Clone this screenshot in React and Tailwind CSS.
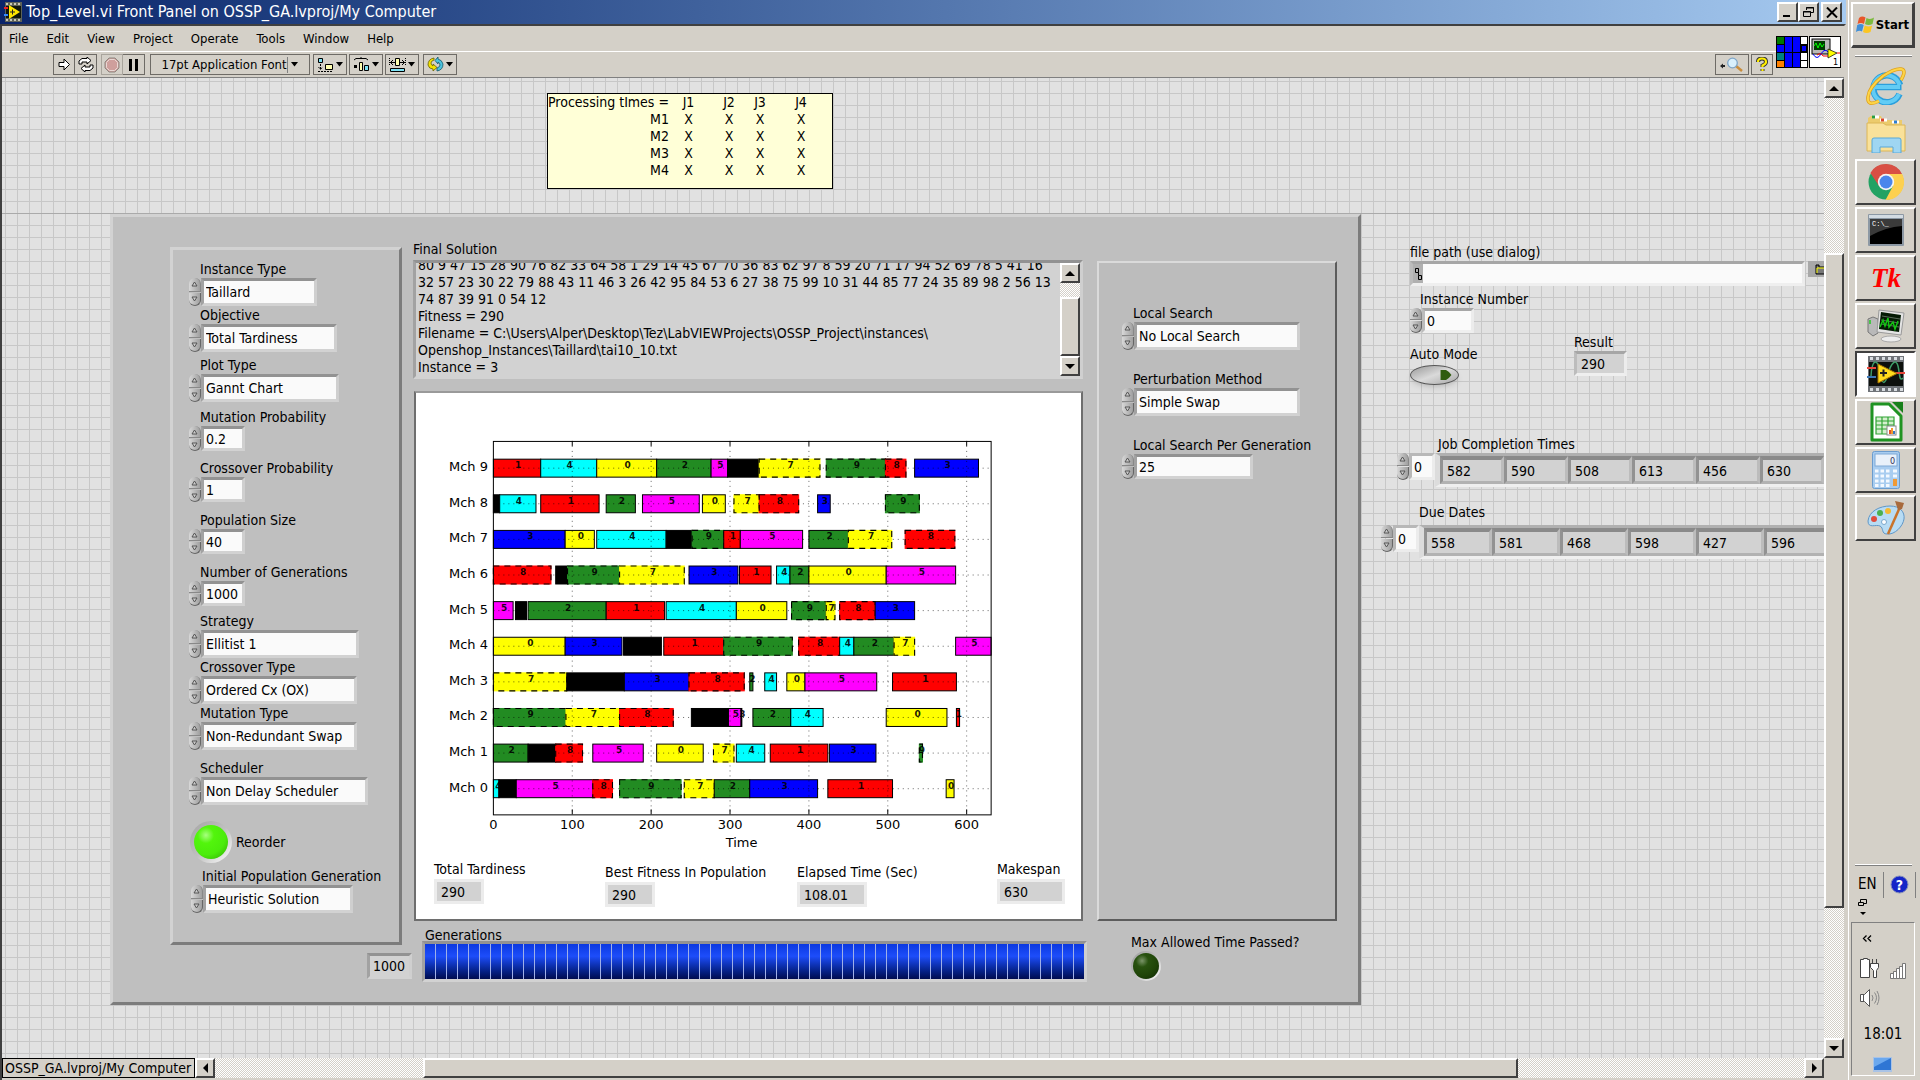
import React, { useEffect, useRef } from "react";

const COLORS = {
  0: "#ffff00",
  1: "#ff0000",
  2: "#228b22",
  3: "#0000ff",
  4: "#00ffff",
  5: "#ff00ff",
  6: "#000000",
  7: "#ffff00",
  8: "#ff0000",
  9: "#228b22",
};

// Each entry: [job, start, end]
const SCHEDULE = [
  [9, [[1, 0, 60], [4, 60, 131], [0, 131, 207], [2, 207, 276], [5, 276, 297], [6, 297, 337], [7, 337, 414], [9, 422, 497], [8, 497, 523], [3, 534, 615]]],
  [8, [[6, 0, 8], [4, 8, 54], [1, 60, 134], [2, 143, 180], [5, 189, 261], [0, 265, 294], [7, 305, 337], [8, 337, 387], [3, 411, 427], [9, 497, 540]]],
  [7, [[3, 0, 91], [0, 91, 128], [4, 131, 219], [6, 219, 252], [9, 252, 292], [1, 292, 313], [5, 313, 392], [2, 400, 450], [7, 450, 505], [8, 522, 585]]],
  [6, [[8, 0, 73], [6, 79, 94], [9, 94, 160], [7, 160, 242], [3, 248, 310], [1, 312, 352], [4, 359, 376], [2, 376, 400], [0, 400, 498], [5, 498, 586]]],
  [5, [[5, 0, 25], [6, 28, 42], [2, 44, 143], [1, 143, 217], [4, 219, 308], [0, 308, 372], [9, 378, 422], [7, 422, 433], [8, 439, 484], [3, 484, 534]]],
  [4, [[0, 0, 91], [3, 91, 163], [6, 165, 213], [1, 216, 292], [9, 292, 379], [8, 387, 439], [4, 439, 457], [2, 457, 508], [7, 508, 534], [5, 586, 631]]],
  [3, [[7, 0, 93], [6, 93, 166], [3, 166, 248], [8, 248, 318], [2, 325, 329], [4, 344, 359], [0, 372, 395], [5, 395, 486], [1, 506, 587]]],
  [2, [[9, 0, 92], [7, 92, 160], [8, 160, 228], [6, 251, 298], [5, 298, 314], [3, 314, 315], [2, 329, 377], [4, 377, 418], [0, 498, 575], [1, 587, 591]]],
  [1, [[2, 0, 44], [6, 44, 79], [8, 79, 113], [5, 126, 190], [0, 207, 266], [7, 279, 305], [4, 308, 344], [1, 351, 424], [3, 426, 485], [9, 540, 544]]],
  [0, [[4, 0, 7], [6, 7, 29], [5, 29, 126], [8, 126, 151], [9, 160, 238], [7, 242, 280], [2, 280, 325], [3, 325, 411], [1, 424, 506], [0, 574, 584]]],
];

const X0 = 77.5;
const SCALE = 0.79;

function GanttChart() {
  const ticks = [0, 100, 200, 300, 400, 500, 600];
  const rowY = (m) => 396.3 - m * 35.67;
  return (
    <svg viewBox="0 0 666 468" className="block w-full font-['DejaVu_Sans',sans-serif]" role="img" aria-label="Gantt chart">
      {SCHEDULE.map(([m, bars]) => (
        <g key={m}>
          {bars.map(([job, s, e], i) => {
            const x = X0 + s * SCALE;
            const w = Math.min((e - s) * SCALE, 576 - x);
            return (
              <g key={i}>
                <rect x={x} y={rowY(m) - 9} width={w} height="18" fill={COLORS[job]} stroke={job > 6 ? COLORS[job] : "#000"} strokeWidth="1" />
                {job > 6 && <rect x={x} y={rowY(m) - 9} width={w} height="18" fill="none" stroke="#000" strokeWidth="1.1" strokeDasharray="6 5" />}
              </g>
            );
          })}
        </g>
      ))}
      <g stroke="#000" strokeOpacity="0.6" strokeWidth="1" strokeDasharray="1 4">
        {SCHEDULE.map(([m]) => (
          <line key={m} x1={X0} x2="576" y1={rowY(m)} y2={rowY(m)} />
        ))}
        {ticks.slice(1).map((t) => (
          <line key={t} x1={X0 + t * SCALE} x2={X0 + t * SCALE} y1="48" y2="422" />
        ))}
      </g>
      <g stroke="#000" strokeWidth="1">
        {ticks.slice(1).map((t) => (
          <path key={t} d={`M${X0 + t * SCALE} 48v5M${X0 + t * SCALE} 422v-5`} fill="none" />
        ))}
        <rect x={X0} y="48.5" width="498.5" height="374" fill="none" />
      </g>
      <g fontSize="9" fontWeight="bold" textAnchor="middle" fill="#000" fillOpacity="0.9">
        {SCHEDULE.map(([m, bars]) =>
          bars
            .filter(([job]) => job !== 6)
            .map(([job, s, e], i) => (
              <text key={m + "-" + i} x={X0 + Math.max(((s + e) / 2) * SCALE + 1, 5)} y={rowY(m)}>
                {job}
              </text>
            ))
        )}
      </g>
      <g fontSize="13" fill="#000">
        {SCHEDULE.map(([m]) => (
          <text key={m} x="72" y={rowY(m) + 3} textAnchor="end">
            Mch {m}
          </text>
        ))}
        {ticks.map((t) => (
          <text key={t} x={X0 + t * SCALE} y="437" textAnchor="middle">
            {t}
          </text>
        ))}
        <text x="326" y="455" textAnchor="middle">
          Time
        </text>
      </g>
    </svg>
  );
}

const RAISED = "border-2 border-t-white border-l-white border-r-[#404040] border-b-[#404040] bg-[#d4d0c8]";
const SUNK = "border-[3px] border-t-[#929292] border-l-[#a2a2a2] border-r-[#cfcfcf] border-b-[#d2d2d2]";
const SUNK_LIGHT = "border-[3px] border-t-[#a6a6a6] border-l-[#bcbcbc] border-r-[#ececec] border-b-[#efefef]";

function Triangle({ dir, size = 10 }) {
  const d = {
    up: "M0 8L5 3L10 8Z",
    down: "M0 3L5 8L10 3Z",
    left: "M8 0L3 5L8 10Z",
    right: "M3 0L8 5L3 10Z",
  }[dir];
  return (
    <svg width={size} height={size} viewBox="0 0 10 10" aria-hidden="true">
      <path d={d} fill="#000" />
    </svg>
  );
}

function Spinner({ name }) {
  return (
    <span className="flex w-3 shrink-0 flex-col gap-px self-stretch">
      <button aria-label={"Increase " + name} className="flex flex-1 items-center justify-center rounded-t-full border-r border-b border-[#888] bg-linear-to-r from-[#d8d8d8] to-[#a0a0a0]">
        <svg width="7" height="6" viewBox="0 0 7 6"><path d="M1 5L3.500 1L6 5Z" fill="#ccc" stroke="#555" /></svg>
      </button>
      <button aria-label={"Decrease " + name} className="flex flex-1 items-center justify-center rounded-b-full border-r border-b border-[#666] bg-linear-to-r from-[#d8d8d8] to-[#a0a0a0]">
        <svg width="7" height="6" viewBox="0 0 7 6"><path d="M1 1L3.500 5L6 1Z" fill="#ccc" stroke="#555" /></svg>
      </button>
    </span>
  );
}

function Control({ id, label, value, numeric, width, gap = "", light, indent = "pl-[11px]" }) {
  const box = (light ? SUNK_LIGHT : SUNK) + " " + width + " appearance-none bg-[#fafafa] px-0.5 text-sm leading-4 rounded-none text-black outline-none " + (numeric ? "h-[25px]" : "h-7");
  return (
    <div className={gap}>
      <label htmlFor={id} className={"block text-sm leading-[18px] whitespace-nowrap " + indent}>{label}</label>
      <div className="flex">
        <Spinner name={label} />
        {numeric ? (
          <input id={id} defaultValue={value} className={box} />
        ) : (
          <select id={id} defaultValue={value} className={box}>
            <option>{value}</option>
          </select>
        )}
      </div>
    </div>
  );
}

function Indicator({ label, value, width, gap = "", tone = "panel" }) {
  const edge = tone === "white" ? "mt-px border-[3px] border-[#ececec]" : SUNK_LIGHT;
  return (
    <div className={gap}>
      <div className="text-sm leading-[18px] whitespace-nowrap">{label}</div>
      <output aria-label={label} className={edge + " " + width + " flex h-[25px] items-center bg-[#d2d2d2] pl-1 text-sm leading-4"}>{value}</output>
    </div>
  );
}

const LEFT_CONTROLS = [
  ["instance-type", "Instance Type", "Taillard", false, "w-[116px]", ""],
  ["objective", "Objective", "Total Tardiness", false, "w-[136px]", ""],
  ["plot-type", "Plot Type", "Gannt Chart", false, "w-[138px]", "mt-1"],
  ["mutation-probability", "Mutation Probability", "0.2", true, "w-[44px]", "mt-1.5"],
  ["crossover-probability", "Crossover Probability", "1", true, "w-[44px]", "mt-2"],
  ["population-size", "Population Size", "40", true, "w-[44px]", "mt-[9px]"],
  ["generations", "Number of Generations", "1000", true, "w-[44px]", "mt-[9px]"],
  ["strategy", "Strategy", "Ellitist 1", false, "w-[158px]", "mt-1.5"],
  ["crossover-type", "Crossover Type", "Ordered Cx (OX)", false, "w-[156px]", ""],
  ["mutation-type", "Mutation Type", "Non-Redundant Swap", false, "w-[156px]", ""],
  ["scheduler", "Scheduler", "Non Delay Scheduler", false, "w-[167px]", "mt-[9px]"],
];

const PANEL = "border-[3px] border-t-[#d2d2d2] border-l-[#d2d2d2] border-r-[#7c7c7c] border-b-[#7c7c7c] bg-[#bfbfbf]";

function SettingsPanel() {
  return (
    <section className={PANEL + " w-[232px] pt-[10px] pb-[29px] pl-4"}>
      {LEFT_CONTROLS.map(([id, label, value, numeric, width, gap]) => (
        <Control key={id} id={id} label={label} value={value} numeric={numeric} width={width} gap={gap} />
      ))}
      <label className="mt-4 flex items-center gap-1 pl-px text-sm">
        <input type="checkbox" defaultChecked className="sr-only" />
        <span className="flex size-[42px] items-center justify-center rounded-full bg-linear-135 from-[#a4a4a4] via-[#bfbfbf] to-white">
          <span className="size-[34px] rounded-full bg-[radial-gradient(circle_at_35%_30%,#a8ff80_0%,#52f50c_25%,#4bec0b_60%,#2fa603_100%)]" />
        </span>
        Reorder
      </label>
      <Control id="initial-population" label="Initial Population Generation" value="Heuristic Solution" numeric={false} width="w-[150px]" gap="mt-1 ml-0.5" />
    </section>
  );
}

const SOLUTION = `80 9 47 15 28 90 76 82 33 64 58 1 29 14 45 67 70 36 83 62 97 8 59 20 71 17 94 52 69 78 5 41 16
32 57 23 30 22 79 88 43 11 46 3 26 42 95 84 53 6 27 38 75 99 10 31 44 85 77 24 35 89 98 2 56 13
74 87 39 91 0 54 12
Fitness = 290
Filename = C:\\Users\\Alper\\Desktop\\Tez\\LabVIEWProjects\\OSSP_Project\\instances\\
Openshop_Instances\\Taillard\\tai10_10.txt
Instance = 3`;

const DITHER = "bg-[repeating-conic-gradient(#ffffff_0_25%,#d4d0c8_0_50%)] bg-[length:2px_2px]";

function FinalSolution() {
  const ref = useRef(null);
  useEffect(() => {
    ref.current.scrollTop = ref.current.scrollHeight;
  }, []);
  return (
    <div className="pr-[14px]">
      <label htmlFor="final-solution" className="block text-sm leading-[18px]">Final Solution</label>
      <div className={SUNK + " mt-0.5 flex h-[119px] bg-[#d2d2d2]"}>
        <textarea id="final-solution" ref={ref} readOnly wrap="off" defaultValue={SOLUTION} className="min-w-0 flex-1 resize-none overflow-hidden pl-0.5 text-sm leading-[17px] outline-none" />
        <div className={"flex w-5 flex-col " + DITHER}>
          <button aria-label="Scroll up" className={RAISED + " flex h-5 items-center justify-center"}><Triangle dir="up" /></button>
          <div className="h-[14px]" />
          <div className={RAISED + " flex-1"} />
          <button aria-label="Scroll down" className={RAISED + " flex h-5 items-center justify-center"}><Triangle dir="down" /></button>
        </div>
      </div>
    </div>
  );
}

function Results() {
  return (
    <div className="flex min-w-0 flex-1 flex-col">
      <FinalSolution />
      <div className="mt-3 mr-[14px] ml-px border-2 border-t-[#9a9a9a] border-l-[#6e6e6e] border-r-[#6e6e6e] border-b-[#6e6e6e] bg-white pb-3">
        <GanttChart />
        <div className="grid grid-cols-[171px_192px_200px_1fr] pl-[18px]">
          <Indicator tone="white" label="Total Tardiness" value="290" width="w-[50px]" />
          <Indicator tone="white" label="Best Fitness In Population" value="290" width="w-[50px]" gap="pt-[3px]" />
          <Indicator tone="white" label="Elapsed Time (Sec)" value="108.01" width="w-[70px]" gap="pt-[3px]" />
          <Indicator tone="white" label="Makespan" value="630" width="w-[68px]" />
        </div>
      </div>
      <div className="mt-2 pr-[10px] pl-[9px]">
        <div className="pl-[3px] text-sm leading-3">Generations</div>
        <div className={SUNK + " h-[41px]"} role="progressbar" aria-label="Generations" aria-valuenow={1000} aria-valuemax={1000}>
          <div className="flex h-full gap-px bg-[#9fb0e8]">
            {Array.from({ length: 60 }, (_, i) => (
              <span key={i} className="flex-1 bg-linear-to-b from-[#0a38e0] via-[#1d4dfa] via-35% to-[#000c50]" />
            ))}
          </div>
        </div>
      </div>
    </div>
  );
}

function SearchColumn() {
  return (
    <div className="w-[240px] shrink-0">
      <section className="mt-[21px] h-[660px] border-2 border-t-[#dadada] border-l-[#dadada] border-r-[#5c5c5c] border-b-[#5c5c5c] bg-[#bcbcbc] pt-[41px] pl-[23px]">
        <Control id="local-search" label="Local Search" value="No Local Search" width="w-[166px]" />
        <Control id="perturbation" label="Perturbation Method" value="Simple Swap" width="w-[166px]" gap="mt-5" />
        <Control id="per-generation" label="Local Search Per Generation" value="25" numeric width="w-[119px]" gap="mt-5" />
      </section>
      <div className="mt-3 pl-[34px]">
        <div className="text-sm leading-[18px]">Max Allowed Time Passed?</div>
        <span role="img" aria-label="Off" className="flex size-[30px] items-center justify-center rounded-full bg-linear-135 from-[#9c9c9c] via-[#bfbfbf] to-white">
          <span className="size-[26px] rounded-full bg-[radial-gradient(circle_at_35%_30%,#7a9468_0%,#28520f_25%,#1f4408_60%,#0d2402_100%)]" />
        </span>
      </div>
    </div>
  );
}

function ArrayField({ id, label, index, values, cell, labelPad, rowPad }) {
  return (
    <div>
      <label htmlFor={id} className={"block text-sm leading-[18px] " + labelPad}>{label}</label>
      <div className={"flex items-start " + rowPad}>
        <div className="flex h-[27px]">
          <Spinner name={label} />
          <input id={id} defaultValue={index} className="h-[27px] w-[26px] border-[3px] border-[#ececec] border-t-[#b8b8b8] border-l-[#b8b8b8] bg-[#fafafa] pl-0.5 text-sm outline-none" />
        </div>
        <div className="min-w-0 flex-1 overflow-hidden border-t-[3px] border-b-[3px] border-l-[5px] border-[#b0b0b0] border-b-[#efefef] border-l-[#dcdcdc]">
          <ul className="flex w-max">
            {values.map((v, i) => (
              <li key={i} className={cell + " flex h-7 items-center border-[3px] border-t-4 border-t-[#8a8a8a] border-r-[#bcbcbc] border-b-[#b2b2b2] border-l-[#929292] bg-[#d2d2d2] pl-1 text-sm"}>{v}</li>
            ))}
          </ul>
        </div>
      </div>
    </div>
  );
}

function SideControls() {
  return (
    <div className="w-[463px] shrink-0 pt-[29px]">
      <div className="pl-[49px]">
        <label htmlFor="file-path" className="block text-sm leading-[18px]">file path (use dialog)</label>
        <div className="flex items-start">
          <div className={SUNK_LIGHT + " flex h-[25px] w-[395px] bg-[#b0b0b0]"}>
            <svg width="10" height="19" viewBox="0 0 10 19" aria-hidden="true"><path d="M2.500 4.500h3v4h-3zM5.500 8.500v3M5.500 11.500h3v4h-3z" fill="none" stroke="#000" /></svg>
            <input id="file-path" defaultValue="" className="min-w-0 flex-1 bg-[#fafafa] text-sm outline-none" />
          </div>
          <button aria-label="Browse" className="ml-[3px] flex h-4 flex-1 items-center justify-end bg-[#a8a8a8]">
            <svg width="9" height="12" viewBox="0 0 9 12"><path d="M1 11V2h3v2h6v7z" fill="#777" stroke="#000" /><path d="M2 5h7M2 5v5" stroke="#ff0" /></svg>
          </button>
        </div>
      </div>
      <div className="mt-1 pl-[49px]">
        <Control id="instance-number" label="Instance Number" value="0" numeric light width="w-[52px]" indent="pl-2.5" />
      </div>
      <div className="flex pl-[49px]">
        <div className="w-[164px] pt-3">
          <label htmlFor="auto-mode" className="block text-sm leading-[18px]">Auto Mode</label>
          <button id="auto-mode" role="switch" aria-checked="false" className="mt-0.5 flex h-5 w-[49px] items-center justify-end rounded-[50%] border border-[#555] bg-linear-to-br from-[#989898] via-[#dadada] to-[#a8a8a8] pr-1.5 shadow-md">
            <svg width="12" height="10" viewBox="0 0 12 11"><path d="M0 0h6q4 2 6 5.500q-2 3-6 5.500h-6z" fill="#2f5c10" /></svg>
          </button>
        </div>
        <Indicator label="Result" value="290" width="w-[53px]" />
      </div>
      <div className="mt-[50px]">
        <ArrayField id="job-index" label="Job Completion Times" index="0" values={[582, 590, 508, 613, 456, 630]} cell="w-[64px]" labelPad="pl-[77px]" rowPad="pl-9" />
      </div>
      <div className="mt-4">
        <ArrayField id="due-index" label="Due Dates" index="0" values={[558, 581, 468, 598, 427, 596]} cell="w-[68px]" labelPad="pl-[58px]" rowPad="pt-1 pl-5" />
      </div>
    </div>
  );
}

function NoteBox() {
  return (
    <div className="mt-[15px] mb-6 ml-[545px] h-24 w-[286px] border border-black bg-[#ffffd7]">
      <table className="text-sm leading-[17px]">
        <thead>
          <tr>
            <th className="w-[116px] text-left font-normal whitespace-nowrap">Processing tImes =</th>
            <th className="w-[39px] font-normal">J1</th>
            <th className="w-[42px] font-normal">J2</th>
            <th className="w-5 font-normal">J3</th>
            <th className="w-[62px] font-normal">J4</th>
          </tr>
        </thead>
        <tbody>
          {["M1", "M2", "M3", "M4"].map((m) => (
            <tr key={m} className="text-center">
              <td className="text-right">{m}</td>
              <td>X</td>
              <td>X</td>
              <td>X</td>
              <td>X</td>
            </tr>
          ))}
        </tbody>
      </table>
    </div>
  );
}

function Canvas() {
  return (
    <main className="min-w-0 flex-1 overflow-hidden bg-[#e1e1e1] bg-[linear-gradient(to_right,#c7c7c7_1px,transparent_1px),linear-gradient(to_bottom,#c7c7c7_1px,transparent_1px)] bg-[length:12px_12px] bg-[position:3px_3px]">
      <NoteBox />
      <div className="flex items-start border-t border-[#aaa] pl-[108px]">
        <div className={PANEL + " flex min-w-0 flex-1 items-start pt-[23px] pr-[21px] pb-[20px] pl-[57px]"}>
          <div className="flex w-[243px] shrink-0 flex-col pt-[7px]">
            <SettingsPanel />
            <output aria-label="Generation count" className={SUNK + " mt-2 mr-px flex h-[26px] w-[45px] items-center self-end bg-[#d2d2d2] pl-[3px] text-sm"}>1000</output>
          </div>
          <Results />
          <SearchColumn />
        </div>
        <SideControls />
      </div>
    </main>
  );
}

const TOOL = "flex h-[21px] shrink-0 items-center justify-center border border-[#6e6b66] bg-[#d4d0c8]";

function Caret() {
  return <svg width="7" height="5" viewBox="0 0 7 5" aria-hidden="true"><path d="M0 0h7L3.500 4.500z" fill="#000" /></svg>;
}

function Toolbar() {
  return (
    <div className="flex h-[27px] items-center border-t border-b border-t-white border-b-[#808080] pl-[51px]">
      <button aria-label="Run" className={TOOL + " w-[22px]"}>
        <svg width="13" height="13" viewBox="0 0 13 13"><path d="M1 4.500h5V1l5.500 5.500L6 12V8.500H1z" fill="#fff" stroke="#000" /></svg>
      </button>
      <button aria-label="Run continuously" className={TOOL + " w-[22px] border-l-0"}>
        <svg width="16" height="15" viewBox="0 0 16 15" fill="#fff" stroke="#000"><path d="M1 7V4l3-2.500h5V0l4 3.500L9 7V5H4v2z" /><path d="M15 8v3l-3 2.500H7V15l-4-3.500L7 8v2h5V8z" /></svg>
      </button>
      <button aria-label="Abort" className={TOOL + " ml-1 w-[22px] border-[#a8a49c]"}>
        <svg width="16" height="16" viewBox="0 0 16 16"><path d="M5 1h6l4 4v6l-4 4H5l-4-4V5z" fill="#cf9f9c" stroke="#8d8780" /><path d="M5.500 2.500h5l3 3v5l-3 3h-5l-3-3v-5z" fill="none" stroke="#e8d8d4" /></svg>
      </button>
      <button aria-label="Pause" className={TOOL + " w-[22px] border-l-0"}>
        <svg width="11" height="12" viewBox="0 0 11 12"><path d="M1 0h3v12H1zM7 0h3v12H7z" fill="#000" /></svg>
      </button>
      <button className={TOOL + " ml-[5px] w-40 justify-between pr-[7px] pl-1.5 text-[13px] whitespace-nowrap"}>
        <span>17pt Application Font</span>
        <span className="flex h-4 items-center border-l border-[#808080] pl-[3px]"><Caret /></span>
      </button>
      <button aria-label="Align objects" className={TOOL + " ml-[3px] w-[34px] gap-0.5"}>
        <svg width="17" height="15" viewBox="0 0 17 15"><path d="M1.500 1.500h4v4h-4z" fill="#7fe3f5" stroke="#000" /><path d="M3.500 7v5M1.500 10l2 2.500 2-2.500M1 14.500h15" fill="none" stroke="#000" strokeDasharray="2 1" /><path d="M8.500 7.500h7v5h-7z" fill="#ffffb0" stroke="#000" /></svg>
        <Caret />
      </button>
      <button aria-label="Distribute objects" className={TOOL + " ml-0.5 w-[34px] gap-0.5"}>
        <svg width="17" height="15" viewBox="0 0 17 15"><path d="M1 3l2-1.500h10l2 1.500M8 1.500V0" fill="none" stroke="#000" /><path d="M1 8h3v3H1z" fill="#000" /><path d="M6.500 5.500h3v8h-3z" fill="#ffffb0" stroke="#000" /><path d="M11.500 8.500h4v5h-4z" fill="#7fe3f5" stroke="#000" /></svg>
        <Caret />
      </button>
      <button aria-label="Resize objects" className={TOOL + " ml-0.5 w-[34px] gap-0.5"}>
        <svg width="17" height="16" viewBox="0 0 17 16"><path d="M.5 1v8M16.500 1v8" stroke="#000" strokeDasharray="1 1" /><path d="M1 5.500h15M4 3L1.500 5.500L4 8M13 3l2.500 2.500L13 8" fill="none" stroke="#000" /><path d="M6.500 1.500h4v7h-4z" fill="#ffffb0" stroke="#000" /><path d="M1.500 11.500h14v3h-14z" fill="#7fe3f5" stroke="#000" /></svg>
        <Caret />
      </button>
      <button aria-label="Reorder" className={TOOL + " ml-1 w-[34px] gap-0.5"}>
        <svg width="17" height="15" viewBox="0 0 17 15" strokeWidth=".8"><path d="M7 1Q1 2 1 8q1 4 5 4v2l4-3.500L6 7v2Q4 8 4 6q0-2 3-3z" fill="#f3e200" stroke="#665f00" /><path d="M10 14q6-1 6-7q-1-4-5-5V0L8 3.500L11 7V5q2 1 2 3t-3 3z" fill="#4cc3de" stroke="#125567" /></svg>
        <Caret />
      </button>
      <div className="flex-1" />
      <button aria-label="Search" className={TOOL + " w-[34px]"}>
        <svg width="24" height="16" viewBox="0 0 24 16"><path d="M0 9l3-2.500v1.500h2v2H3v1.500z" fill="#222" /><path d="M16 9l6 5" stroke="#c98d3c" strokeWidth="2.500" /><circle cx="12.500" cy="6" r="4.800" fill="#d9f0fc" stroke="#7fa6c8" strokeWidth="1.300" /></svg>
      </button>
      <button aria-label="Context help" className={TOOL + " mr-[3px] ml-0.5 w-[22px]"}>
        <svg width="12" height="15" viewBox="0 0 12 15"><path d="M2 5q0-3.500 4-3.500T10 5q0 2-3.500 3.500V10M6.500 12v2" fill="none" stroke="#333" strokeWidth="4" /><path d="M2 5q0-3.500 4-3.500T10 5q0 2-3.500 3.500V10M6.500 12v2" fill="none" stroke="#ffee00" strokeWidth="2.200" /></svg>
      </button>
    </div>
  );
}

function MenuRow() {
  return (
    <div className="flex bg-[#d4d0c8]">
      <div className="min-w-0 flex-1">
        <nav className="flex h-[25px] items-center gap-[18px] pl-[7px] text-[13px]">
          {["File", "Edit", "View", "Project", "Operate", "Tools", "Window", "Help"].map((m) => (
            <button key={m}>{m}</button>
          ))}
        </nav>
        <Toolbar />
      </div>
      <div className="flex items-center gap-px border-b border-[#808080] pr-[3px]">
        <svg width="32" height="32" viewBox="0 0 32 32" role="img" aria-label="Connector pane">
          <rect width="32" height="32" fill="#000" />
          <path d="M1 1h7v7H1z" fill="#007a00" /><path d="M1 9h7v7H1z" fill="#0000ff" /><path d="M1 17h7v7H1z" fill="#008080" /><path d="M1 25h7v6H1z" fill="#ff8000" />
          <path d="M9 1h7v15H9zM17 1h7v15h-7zM9 17h7v14H9zM17 17h7v14h-7z" fill="#0000ff" />
          <path d="M25 1h6v7h-6zM25 17h6v7h-6zM25 25h6v6h-6z" fill="#fff" /><path d="M26 10h4v5h-4z" fill="#0000ff" />
        </svg>
        <svg width="32" height="32" viewBox="0 0 32 32" role="img" aria-label="VI icon">
          <rect x=".5" y=".5" width="31" height="31" fill="#fff" stroke="#000" />
          <rect x="3" y="3" width="18" height="15" fill="#b8b8b8" stroke="#000" />
          <rect x="5" y="5" width="11" height="9" fill="#003b00" /><path d="M5 10l2-3 2 5 2-5 2 4 2-3" fill="none" stroke="#0f0" />
          <path d="M4 18q4 7 8 0t8-1" fill="none" stroke="#00f" /><path d="M8 19q4-3 6 1h5" fill="none" stroke="#f00" />
          <path d="M19 13l9 4-9 5z" fill="#ffff00" stroke="#000" strokeWidth=".7" /><path d="M28 17h3" stroke="#f00" />
          <text x="24" y="29" fontSize="9">1</text>
        </svg>
      </div>
    </div>
  );
}

function TitleBar() {
  const btn = RAISED + " flex h-5 w-[21px] items-center justify-center";
  return (
    <header className="flex h-6 items-center bg-linear-to-r from-[#0a246a] to-[#a6caf0] pr-1 pl-1">
      <svg width="19" height="20" viewBox="0 0 19 20" aria-hidden="true">
        <rect x="1" width="17" height="20" fill="#5e6258" /><rect x="2" y="4" width="15" height="12" fill="#10160c" />
        <path d="M2 2h15M2 18h15" stroke="#c8c8b8" strokeWidth="2" strokeDasharray="2 2" />
        <path d="M0 6h4" stroke="#e22" strokeWidth="2" /><path d="M0 13h4" stroke="#38f" strokeWidth="2" />
        <path d="M5 3l11 7-11 7z" fill="#ffe600" /><path d="M6 10h5M8.500 7.500v5" stroke="#222" />
      </svg>
      <h1 className="flex-1 pl-[3px] text-base leading-5 text-white">Top_Level.vi Front Panel on OSSP_GA.lvproj/My Computer</h1>
      <button aria-label="Minimize" className={btn}><svg width="12" height="12" viewBox="0 0 12 12"><path d="M1 9h7v2H1z" /></svg></button>
      <button aria-label="Restore" className={btn}><svg width="13" height="12" viewBox="0 0 13 12" fill="none" stroke="#000"><path d="M4.500 4V1.500h7v5h-3M4 2h8M1.500 5.500h7v5h-7zM1 6h8" /></svg></button>
      <button aria-label="Close" className={btn + " ml-0.5"}><svg width="12" height="11" viewBox="0 0 12 11"><path d="M1 .5l10 10M11 .5l-10 10" stroke="#000" strokeWidth="2" /></svg></button>
    </header>
  );
}

function VerticalScroll() {
  return (
    <div className={"flex w-5 shrink-0 flex-col " + DITHER}>
      <button aria-label="Scroll canvas up" className={RAISED + " flex h-5 items-center justify-center"}><Triangle dir="up" /></button>
      <div className="h-[155px]" />
      <div className={RAISED + " flex-1"} />
      <div className="h-[130px]" />
      <button aria-label="Scroll canvas down" className={RAISED + " flex h-5 items-center justify-center"}><Triangle dir="down" /></button>
    </div>
  );
}

function BottomBar() {
  return (
    <footer className="flex h-[22px] bg-[#d4d0c8] pb-0.5">
      <div className="flex w-[193px] items-center border border-black pl-0.5 text-sm leading-4 whitespace-nowrap">OSSP_GA.lvproj/My Computer</div>
      <div className={"flex flex-1 " + DITHER}>
        <button aria-label="Scroll left" className={RAISED + " flex w-5 items-center justify-center"}><Triangle dir="left" /></button>
        <div className="w-[208px]" />
        <div className={RAISED + " flex-1"} />
        <div className="w-[286px]" />
        <button aria-label="Scroll right" className={RAISED + " flex w-5 items-center justify-center"}><Triangle dir="right" /></button>
      </div>
      <div className="w-5" />
    </footer>
  );
}

const WindowsFlag = () => (
  <svg width="19" height="19" viewBox="0 0 19 19" aria-hidden="true">
    <path d="M3 3q3-2.500 6.500-.5L8 9Q5 7 1.500 9z" fill="#e8562a" /><path d="M10.500 3q4 2 7.500-.5L16.500 9q-4 2-7.500 0z" fill="#7cba3d" />
    <path d="M1.200 10Q5 8 7.700 10L6 16.500Q3.500 15 0 17z" fill="#3f8fd8" /><path d="M8.700 10.500q4 2 7.500 0L14.500 17q-4 2-7.500 0z" fill="#fbc623" />
  </svg>
);

const APPS = [
  ["Google Chrome",
    <svg viewBox="0 0 36 36" className="size-9"><circle cx="18" cy="18" r="17.500" fill="#22a263" /><path d="M18 10h16A18 18 0 0 0 2.400 9L11 22z" fill="#d94f44" /><path d="M25 22l-7.500 14A18 18 0 0 0 34.200 10H18z" fill="#fdd04f" /><circle cx="18" cy="18" r="8.200" fill="#f4f4f4" /><circle cx="18" cy="18" r="6.500" fill="#4a86ec" /></svg>],
  ["Command Prompt",
    <svg viewBox="0 0 36 32" className="h-8 w-9"><rect width="36" height="32" rx="1" fill="#8c98a4" /><rect x="1" y="1" width="34" height="3" fill="#d3dbe2" /><rect x="2" y="5" width="32" height="25" fill="#000" /><path d="M2 5h32v7Q18 13 2 22z" fill="#3a3a3a" /><text x="4" y="12" fontSize="7" fill="#fff" fontFamily="Liberation Mono, monospace">C:\_</text></svg>],
  ["Tk",
    <svg viewBox="0 0 36 30" className="h-[30px] w-9"><text x="18" y="24" fontSize="27" fontStyle="italic" fontWeight="bold" fill="#f00" textAnchor="middle" fontFamily="Liberation Serif, serif">Tk</text></svg>],
  ["System monitor",
    <svg viewBox="0 0 38 34" className="h-[34px] w-[38px]"><path d="M1 10l5-2 5 2v14l-5 3-5-4z" fill="#b9b9b9" stroke="#777" /><path d="M3 11v4" stroke="#2c2" strokeWidth="1.500" /><path d="M12 1l25 3-3 22-24-3z" fill="#e4e4e4" stroke="#999" /><path d="M14 3l20 3-2 17-20-3z" fill="#041a04" /><path d="M15 7l18 3M14 11l18 3M14 15l18 3" stroke="#5a6a5a" /><path d="M13 18l3-7 2 6 3-8 1 9 4-5 2 7 3-8" fill="none" stroke="#14c414" strokeWidth="1.500" /><ellipse cx="24" cy="30" rx="10" ry="3" fill="#ececec" stroke="#aaa" /></svg>],
  ["LabVIEW",
    <svg viewBox="0 0 38 36" className="h-9 w-[38px]"><rect x="1" width="36" height="36" fill="#6f7378" /><path d="M3 2.500h34M3 33.500h34" stroke="#d8dce0" strokeWidth="3" strokeDasharray="3 3" /><rect x="2" y="6" width="34" height="24" fill="#0d100d" /><path d="M4 20C5 2 11 2 13 16s5 13 8 2S29 2 31 10s1 16 5 12" fill="none" stroke="#3f9c68" strokeWidth="1.500" /><path d="M0 12h9" stroke="#e8483d" strokeWidth="2" /><path d="M0 21h9" stroke="#3c78b8" strokeWidth="2" /><path d="M28 17h10" stroke="#e8483d" strokeWidth="2" /><path d="M11 8l19 9.500L11 27z" fill="#ffdc1c" stroke="#a87400" /><path d="M13 17h7M16.500 13.500v7" stroke="#222" strokeWidth="2" /></svg>],
  ["LibreOffice Calc",
    <svg viewBox="0 0 34 40" className="h-10 w-[34px]"><path d="M3 2h17l12 12v24H3z" fill="#fff" stroke="#1f9322" strokeWidth="3" strokeLinejoin="round" /><path d="M23 0h11v11z" fill="#18801b" /><path d="M7 15h18v17H7z" fill="#d5efcf" /><path d="M7 15h18v17H7zM7 19h18M7 23h18M7 27h18M13 15v17M19 15v17" fill="none" stroke="#2fa432" strokeWidth="1.200" /><rect x="18" y="24" width="9" height="9" fill="#fff" stroke="#888" /><path d="M20 32v-4h2v4z" fill="#e0542c" /><path d="M22 32v-6h2v6z" fill="#f39a2c" /><path d="M24 32v-3h2v3z" fill="#3878c0" /></svg>],
  ["Calculator",
    <svg viewBox="0 0 28 38" className="h-[38px] w-7"><rect x=".5" y=".5" width="27" height="37" rx="2" fill="#a9cdf0" stroke="#6b9cce" /><rect x="3" y="3" width="22" height="12" fill="#e9f1fa" stroke="#7fa9d6" /><text x="18" y="13" fontSize="9" fill="#335">0</text><path d="M3 20h16M3 25h16M3 30h16M3 34.500h16" stroke="#f4f9ff" strokeWidth="3" strokeDasharray="3.500 2" /><path d="M21 20h4M21 25h4" stroke="#f4f9ff" strokeWidth="3" /><rect x="21" y="28" width="4" height="7" fill="#f09a35" /></svg>],
  ["Paint",
    <svg viewBox="0 0 40 38" className="h-[38px] w-10"><path d="M2 22C3 12 14 7 24 7s15 6 14 13-9 16-17 15c-6 0-3-6-7-8s-12 3-12-5z" fill="#b8dcf4" stroke="#5f97c8" /><circle cx="8" cy="20" r="3" fill="#e04b3c" /><circle cx="14" cy="14" r="3" fill="#4bb04f" /><circle cx="22" cy="12" r="3" fill="#f4b932" /><circle cx="18" cy="23" r="2.500" fill="#fff" stroke="#7aa8cc" /><path d="M34 8L22 35" stroke="#c9732a" strokeWidth="2.500" /><path d="M29 2l9 2-2 6-4 1z" fill="#a86a3c" /></svg>],
];

function Taskbar() {
  return (
    <aside className="flex w-[72px] shrink-0 flex-col border-l border-white bg-[#d4d0c8] pt-0.5 pr-1 pl-0.5">
      <button className={RAISED + " flex h-[46px] w-[64px] items-center justify-center gap-px border-r-[3px] border-b-[3px] text-[13px] font-bold"}>
        <WindowsFlag />
        Start
      </button>
      <div className="mt-[7px] mr-1 ml-1 h-0.5 border-t border-b border-t-white border-b-[#808080]" />
      <div className="mt-1.5 flex flex-col items-center gap-0.5 pl-1">
        <button aria-label="Internet Explorer" className="flex h-[46px] items-center">
          <svg width="40" height="38" viewBox="0 0 40 38" fill="none">
            <path d="M9 20h26.500M33.500 27A13.500 13.500 0 1 1 34 18" stroke="#2b9fdc" strokeWidth="6.500" />
            <path d="M9 20h25M33 27A13.500 13.500 0 1 1 33.500 18" stroke="#62ccf5" strokeWidth="4" />
            <path d="M35 13Q41 3 35 2T17 9Q3 20 2 30t11 4" stroke="#e0a21a" strokeWidth="3.500" />
            <path d="M35 13Q41 3 35 2T17 9Q3 20 2 30t11 4" stroke="#fdd447" strokeWidth="2" />
          </svg>
        </button>
        <button aria-label="File Explorer" className="flex h-[46px] items-center">
          <svg width="40" height="38" viewBox="0 0 40 38"><path d="M2 3l3-2h10l2 4h19v28H2z" fill="#eccb6c" /><path d="M6 2h7M14 5h7M26 7h7" stroke="#fff" strokeWidth="3" /><path d="M6 2h3" stroke="#2a9c40" strokeWidth="3" /><path d="M15 5h3" stroke="#d8452c" strokeWidth="3" /><path d="M28 7h3" stroke="#2d7dd2" strokeWidth="3" /><path d="M1 8h16l3 2h19v26H1z" fill="#f9e19a" stroke="#dcb656" /><path d="M6 38V25q0-2 2-2h25q2 0 2 2v13h-8v-6H14v6z" fill="#9fd6f2" stroke="#58a8d8" /></svg>
        </button>
        {APPS.map(([name, icon]) => (
          <button key={name} aria-label={name} className={(name === "LabVIEW" ? "border-2 border-t-[#404040] border-l-[#404040] border-r-white border-b-white bg-white" : RAISED) + " flex h-[46px] w-full items-center justify-center"}>
            {icon}
          </button>
        ))}
      </div>
      <div className="flex-1" />
      <div className="mr-1 ml-1 h-0.5 border-t border-b border-t-white border-b-[#808080]" />
      <div className="mt-[5px] flex h-[27px] items-center justify-between pl-[7px]">
        <span className="text-[15px]">EN</span>
        <span className="flex h-[26px] items-center border-r border-l border-r-[#808080] border-l-[#808080] px-1.5">
          <svg width="19" height="19" viewBox="0 0 19 19" role="img" aria-label="Help"><circle cx="9.500" cy="9.500" r="8.500" fill="#1526c8" stroke="#8890b8" /><text x="9.500" y="14.500" textAnchor="middle" fontSize="14" fontWeight="bold" fill="#fff">?</text></svg>
        </span>
      </div>
      <div className="flex h-[18px] flex-col justify-between pt-px pl-[7px]">
        <svg width="9" height="8" viewBox="0 0 9 8" fill="none" stroke="#000"><path d="M2.500 3V.5h6v4H6M.5 3.500h5v3h-5z" /></svg>
        <svg width="6" height="4" viewBox="0 0 6 4" className="ml-0.5"><path d="M0 0h6L3 3z" /></svg>
      </div>
      <div className="mt-1.5 mb-1 h-[154px] w-[64px] border border-t-[#808080] border-l-[#808080] border-r-white border-b-white">
        <button aria-label="Show hidden icons" className="mt-3 ml-2.5 block">
          <svg width="10" height="7" viewBox="0 0 10 7" fill="none" stroke="#000" strokeWidth="1.300"><path d="M4.500 .5l-3 3 3 3M9 .5l-3 3 3 3" /></svg>
        </button>
        <div className="mt-[15px] flex items-end justify-between px-[7px]">
          <svg width="21" height="22" viewBox="0 0 21 22" fill="#fff" stroke="#444" role="img" aria-label="Battery"><path d="M4.500 2.500v-1h4v1h2v18h-9v-18z" /><path d="M13.500 2v4M17.500 2v4M11.500 6.500h8v4l-2 3v7h-3v-7l-3-3z" /></svg>
          <svg width="17" height="16" viewBox="0 0 17 16" fill="#fff" stroke="#777" role="img" aria-label="Network"><path d="M.5 10.500h3v5h-3zM3.500 8.500h3v7h-3zM6.500 5.500h3v10h-3zM9.500 3.500h3v12h-3zM12.500 .5h3v15h-3z" /></svg>
        </div>
        <svg width="22" height="21" viewBox="0 0 22 21" className="mt-[9px] ml-[7px]" role="img" aria-label="Volume"><path d="M1.500 6.500h4l5-5v17l-5-5h-4zM4.500 6.500v7" fill="#fff" stroke="#555" /><path d="M13 7q2 3 0 6M15.500 4.500q4 5 0 11M18 3q4 7 0 14" fill="none" stroke="#888" /></svg>
        <div className="mt-[15px] text-center text-[15px] leading-5">18:01</div>
        <svg width="19" height="15" viewBox="0 0 19 15" className="mt-[13px] ml-[21px]" role="img" aria-label="Show desktop"><rect width="19" height="15" fill="#a9c3e6" /><rect x="1" y="1" width="17" height="12" fill="#2f76d4" /><path d="M1 1h17L1 10z" fill="#6ba8ee" /></svg>
      </div>
    </aside>
  );
}

export default function App() {
  return (
    <div className="flex min-h-screen bg-[#d4d0c8] font-['DejaVu_Sans_Condensed','Noto_Sans',sans-serif] text-black">
      <div className="flex min-w-0 flex-1 flex-col pr-0.5">
        <TitleBar />
        <div className="flex flex-1 flex-col border-t-2 border-r-2 border-l-2 border-[#404040] border-r-[#d4d0c8]">
          <MenuRow />
          <div className="flex flex-1">
            <Canvas />
            <VerticalScroll />
          </div>
          <BottomBar />
        </div>
      </div>
      <Taskbar />
    </div>
  );
}
